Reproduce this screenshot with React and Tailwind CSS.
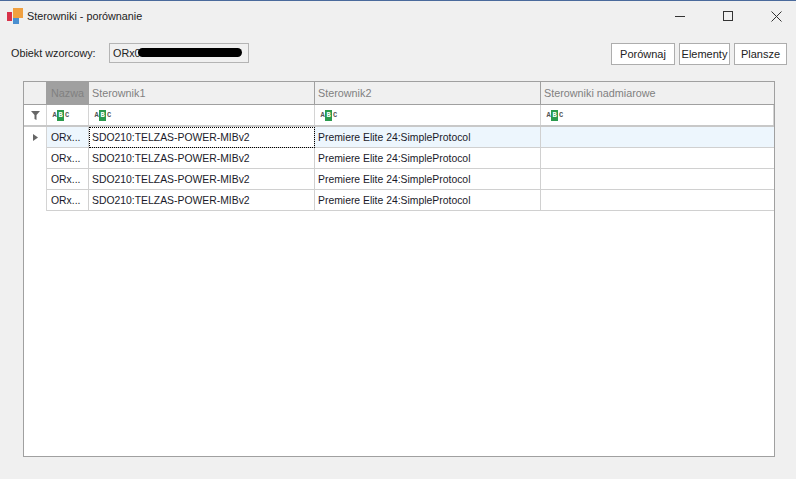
const COLS = "grid grid-cols-[23px_42px_226px_226px_1fr]";

const rows = [0, 1, 2, 3];

const AbcIcon = () => (
  <span className="flex items-center h-[11px] text-[7px] leading-none font-bold text-[#555]" style={{ fontFamily: "Liberation Mono, monospace" }}>
    <span className="w-[5px] text-center">A</span>
    <span className="w-[7px] h-[11px] flex items-center justify-center bg-[#2b9a4d] text-white">B</span>
    <span className="w-[6px] text-center">C</span>
  </span>
);

const Logo = () => (
  <svg width="16" height="17" viewBox="0 0 16 17" className="shrink-0">
    <rect x="0" y="4" width="5" height="9" fill="#d8324a" />
    <rect x="6" y="0" width="10" height="10" fill="#f0a040" />
    <rect x="6" y="10" width="6" height="6" fill="#4a8fd0" />
  </svg>
);

const Button = ({ width, children }) => (
  <button className={`${width} h-[22px] border border-[#adadad] bg-white text-[11px] leading-none text-[#222] whitespace-nowrap`}>
    {children}
  </button>
);

const Header = ({ children, className = "" }) => (
  <div className={`h-[23px] flex items-center pl-[3px] border-r border-b border-[#a0a0a0] text-[10.8px] text-[#808080] truncate ${className}`}>
    {children}
  </div>
);

const FilterCell = () => (
  <div className="h-[20px] flex items-center pl-[5px] border-r border-[#d4d4d4] bg-white">
    <AbcIcon />
  </div>
);

const Cell = ({ active, focus, last, children }) => (
  <div
    className={`h-[21px] flex items-center pl-[3px] pt-[1px] border-r border-b border-[#d0d0d0] text-[10.4px] text-[#1a1a2a] whitespace-nowrap overflow-hidden ${
      active ? "bg-[#edf6fd]" : "bg-white"
    } ${focus ? "bg-white outline-1 outline-dotted -outline-offset-1 outline-black" : ""} ${last ? "border-r-0" : ""}`}
  >
    {children}
  </div>
);

export default function App() {
  return (
    <div
      className="w-[796px] h-[479px] bg-[#f0f0f0] border-t border-[#4a6a9c] flex flex-col overflow-hidden"
      style={{ fontFamily: "'Liberation Sans', sans-serif" }}
    >
      {/* title bar */}
      <div className="h-[30px] flex items-center pl-[7px] shrink-0">
        <Logo />
        <span className="ml-[4px] text-[10.8px] text-[#222]">Sterowniki - porównanie</span>
        <div className="ml-auto flex items-center">
          <div className="w-[40px] h-[30px] flex items-center justify-center">
            <div className="w-[10px] h-px bg-[#333]" />
          </div>
          <div className="w-[56px] h-[30px] flex items-center justify-center">
            <div className="w-[10px] h-[10px] border border-[#333]" />
          </div>
          <div className="w-[40px] h-[30px] flex items-center justify-center">
            <svg width="11" height="11" viewBox="0 0 11 11" stroke="#333" strokeWidth="1">
              <path d="M0.5 0.5L10.5 10.5M10.5 0.5L0.5 10.5" />
            </svg>
          </div>
        </div>
      </div>

      {/* toolbar */}
      <div className="h-[22px] mt-[12px] flex items-start shrink-0 pl-[11px] pr-[9px]">
        <span className="w-[98px] h-[20px] flex items-center text-[10.8px] text-[#222] whitespace-nowrap">Obiekt wzorcowy:</span>
        <div className="relative w-[140px] h-[20px] border border-[#b4b4b4] bg-[#f0f0f0] flex items-center pl-[3px] text-[10.8px] text-[#222] overflow-hidden">
          ORx0
          <div className="absolute left-[28px] top-[4px] w-[104px] h-[9px] rounded-full bg-black" />
        </div>
        <div className="ml-auto flex gap-[4px]">
          <Button width="w-[64px]">Porównaj</Button>
          <Button width="w-[51px]">Elementy</Button>
          <Button width="w-[53px]">Plansze</Button>
        </div>
      </div>

      {/* grid */}
      <div className="mx-[23px] mt-[16px] w-[752px] h-[376px] border border-[#a0a0a0] bg-white overflow-hidden">
        <div className={`${COLS} bg-[#f0f0f0]`}>
          <Header />
          <Header className="bg-[#a0a0a0] text-[#707070]">
            <span className="pl-[1px]">Nazwa</span>
          </Header>
          <Header>Sterownik1</Header>
          <Header>Sterownik2</Header>
          <Header className="border-r-0">Sterowniki nadmiarowe</Header>
        </div>

        <div className={`${COLS} border-b-2 border-[#c8c8c8]`}>
          <div className="h-[20px] flex items-center justify-center border-r border-[#d4d4d4] bg-white">
            <svg width="9" height="9" viewBox="0 0 9 9" fill="#666">
              <path d="M0 0H9L5.5 4V9L3.5 8V4Z" />
            </svg>
          </div>
          <FilterCell />
          <FilterCell />
          <FilterCell />
          <FilterCell />
        </div>

        {rows.map((row) => (
          <div key={row} className={COLS}>
            <div className="h-[21px] flex items-center justify-center border-r border-[#d4d4d4]">
              {row === 0 && (
                <svg width="5" height="7" viewBox="0 0 5 7" fill="#666">
                  <path d="M0 0L5 3.5L0 7Z" />
                </svg>
              )}
            </div>
            <Cell active={row === 0}>
              <span className="pl-[1px]">ORx...</span>
            </Cell>
            <Cell focus={row === 0}>SDO210:TELZAS-POWER-MIBv2</Cell>
            <Cell active={row === 0}>Premiere Elite 24:SimpleProtocol</Cell>
            <Cell active={row === 0} last></Cell>
          </div>
        ))}
      </div>
    </div>
  );
}
